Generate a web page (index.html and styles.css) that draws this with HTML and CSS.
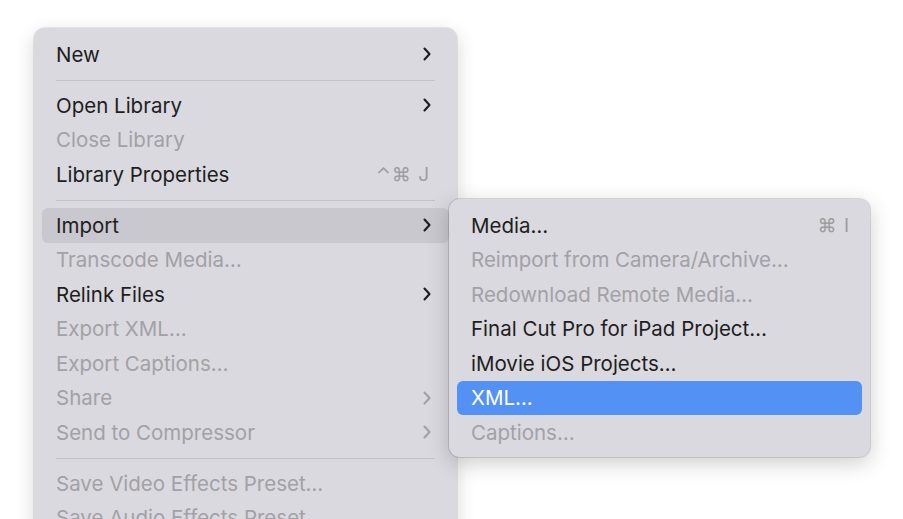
FILE: index.html
```html
<!DOCTYPE html>
<html>
<head>
<meta charset="utf-8">
<link rel="stylesheet" href="styles.css">
</head>
<body>
<div class="menu main">
  <div class="item"><span class="label">New</span><svg class="chev" viewBox="0 0 8 14"><polyline points="1.5,1.5 6.5,7 1.5,12.5"/></svg></div>
  <div class="sep"></div>
  <div class="item"><span class="label">Open Library</span><svg class="chev" viewBox="0 0 8 14"><polyline points="1.5,1.5 6.5,7 1.5,12.5"/></svg></div>
  <div class="item dis"><span class="label">Close Library</span></div>
  <div class="item"><span class="label">Library Properties</span><span class="key">⌃⌘ J</span></div>
  <div class="sep"></div>
  <div class="item hover"><span class="label">Import</span><svg class="chev" viewBox="0 0 8 14"><polyline points="1.5,1.5 6.5,7 1.5,12.5"/></svg>
    <div class="menu sub">
      <div class="item"><span class="label">Media…</span><span class="key">⌘ I</span></div>
      <div class="item dis"><span class="label">Reimport from Camera/Archive…</span></div>
      <div class="item dis"><span class="label">Redownload Remote Media…</span></div>
      <div class="item"><span class="label">Final Cut Pro for iPad Project…</span></div>
      <div class="item"><span class="label">iMovie iOS Projects…</span></div>
      <div class="item active"><span class="label">XML…</span></div>
      <div class="item dis"><span class="label">Captions…</span></div>
    </div>
  </div>
  <div class="item dis"><span class="label">Transcode Media…</span></div>
  <div class="item"><span class="label">Relink Files</span><svg class="chev" viewBox="0 0 8 14"><polyline points="1.5,1.5 6.5,7 1.5,12.5"/></svg></div>
  <div class="item dis"><span class="label">Export XML…</span></div>
  <div class="item dis"><span class="label">Export Captions…</span></div>
  <div class="item dis"><span class="label">Share</span><svg class="chev" viewBox="0 0 8 14"><polyline points="1.5,1.5 6.5,7 1.5,12.5"/></svg></div>
  <div class="item dis"><span class="label">Send to Compressor</span><svg class="chev" viewBox="0 0 8 14"><polyline points="1.5,1.5 6.5,7 1.5,12.5"/></svg></div>
  <div class="sep"></div>
  <div class="item dis"><span class="label">Save Video Effects Preset…</span></div>
  <div class="item dis"><span class="label">Save Audio Effects Preset…</span></div>
</div>
</body>
</html>
```
FILE: styles.css
```css
html, body {
  margin: 0;
  padding: 0;
  background: #ffffff;
  width: 903px;
  height: 519px;
  overflow: hidden;
}
body {
  padding: 28px 0 0 34px;
  box-sizing: border-box;
  font-family: "Inter", "Liberation Sans", sans-serif;
  font-size: 20.5px;
  color: #1e1e20;
  -webkit-font-smoothing: antialiased;
}
.menu {
  background: #dad9df;
  border-radius: 11px;
  box-shadow: 0 0 0 1px rgba(0,0,0,0.08), 0 6px 20px rgba(0,0,0,0.16);
  box-sizing: border-box;
}
.main {
  width: 423px;
  padding: 9px 8px 20px 8px;
}
.item {
  position: relative;
  height: 34.5px;
  display: flex;
  align-items: center;
  padding: 0 16px 0 14px;
  border-radius: 6px;
}
.item .label {
  flex: 1;
  white-space: nowrap;
  letter-spacing: 0;
}
.dis { color: #a2a1a6; }
.hover { background: #c9c8ce; }
.key {
  color: #9d9ca1;
  font-size: 19px;
  letter-spacing: 1px;
  margin-right: 3px;
}
.chev {
  width: 8px;
  height: 14px;
  margin-right: 2px;
  fill: none;
  stroke: #1e1e20;
  stroke-width: 2.1;
  stroke-linecap: round;
  stroke-linejoin: round;
}
.dis .chev { stroke: #a2a1a6; }
.sep {
  height: 1px;
  background: #c3c2c8;
  margin: 8px 14px 7.5px 14px;
}
.sub {
  position: absolute;
  left: 100%;
  top: -9px;
  width: 421px;
  padding: 9px 8px 7px 8px;
  color: #1e1e20;
  z-index: 2;
  box-shadow: 0 0 0 1px rgba(0,0,0,0.12), 0 6px 22px rgba(0,0,0,0.2);
}
.sub .item { padding-left: 14px; }
.sub .item.dis { color: #a2a1a6; }
.sub .key { margin-right: -4px; }
.active {
  background: #5491f5;
  color: #ffffff;
}
```
